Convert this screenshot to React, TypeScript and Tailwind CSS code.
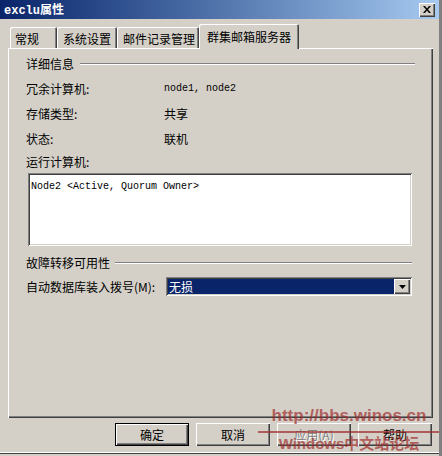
const raised =
  "shadow-[inset_1px_1px_#ffffff,inset_-1px_-1px_#404040,inset_-2px_-2px_#808080]";
const sunken =
  "shadow-[inset_1px_1px_#808080,inset_-1px_-1px_#ffffff,inset_2px_2px_#404040,inset_-2px_-2px_#d4d0c8]";

const Etched = ({ className = "" }: { className?: string }) => (
  <div className={`h-[2px] border-t border-[#808080] border-b border-b-white ${className}`} />
);

const InfoRow = ({ label, value, mono }: { label: string; value: string; mono?: boolean }) => (
  <div className="flex h-[25px] items-center">
    <span className="w-[138px]">{label}</span>
    <span className={mono ? "font-['Liberation_Mono',monospace] text-[10px]" : ""}>{value}</span>
  </div>
);

const tabs = [
  { label: "常规", w: "w-[47px]", pl: "pl-[5px]" },
  { label: "系统设置", w: "w-[60px]", pl: "pl-[6px]" },
  { label: "邮件记录管理", w: "w-[82px]", pl: "pl-[6px]" },
];

export default function App() {
  return (
    <div className="relative w-[442px] h-[456px] overflow-hidden bg-[#d4d0c8] text-[12px] leading-none text-black font-['Noto_Sans_CJK_SC',sans-serif] border-r-[3px] border-r-[#808080]">
      {/* title bar */}
      <div className="flex h-[19px] items-center justify-between bg-gradient-to-r from-[#0a246a] to-[#a6caf0] pl-[4px] pr-[4px]">
        <span className="font-bold text-white">
          <span className="font-['Liberation_Mono',monospace]">exclu</span>属性
        </span>
        <div className={`flex h-[14px] w-[16px] items-center justify-center bg-[#d4d0c8] ${raised}`}>
          <svg width="8" height="7" viewBox="0 0 8 7">
            <path d="M0 0h2l2 2.5L6 0h2L5 3.5 8 7H6L4 4.5 2 7H0l3-3.5z" fill="#000" />
          </svg>
        </div>
      </div>

      {/* tabs */}
      <div className="mt-[5px] mb-[-1px] flex h-[25px] items-end pl-[10px]">
        {tabs.map((t) => (
          <div
            key={t.label}
            className={`mb-[1px] flex h-[21px] items-center ${t.w} ${t.pl} pt-[2px] rounded-t-[2px] shadow-[inset_1px_1px_#ffffff,inset_-1px_0_#404040,inset_-2px_0_#808080]`}
          >
            {t.label}
          </div>
        ))}
        <div className="relative z-10 flex h-[25px] w-[100px] items-center rounded-t-[2px] bg-[#d4d0c8] pl-[8px] shadow-[inset_1px_1px_#ffffff,inset_-1px_0_#404040,inset_-2px_0_#808080]">
          群集邮箱服务器
        </div>
      </div>

      {/* tab panel */}
      <div className={`ml-[8px] flex h-[370px] w-[425px] flex-col pl-[18px] pr-[21px] pt-[4px] ${raised}`}>
        <div className="flex h-[24px] items-center gap-[6px] mr-[-3px]">
          <span>详细信息</span>
          <Etched className="flex-1" />
        </div>
        <InfoRow label="冗余计算机:" value="node1, node2" mono />
        <InfoRow label="存储类型:" value="共享" />
        <InfoRow label="状态:" value="联机" />
        <div className="flex h-[22px] items-center">运行计算机:</div>
        <div className={`ml-[2px] h-[73px] bg-white px-[3px] pt-[5px] ${sunken}`}>
          <span className="font-['Liberation_Mono',monospace] text-[10px]">
            Node2 &lt;Active, Quorum Owner&gt;
          </span>
        </div>
        <div className="mt-[6px] flex h-[22px] items-center gap-[5px]">
          <span>故障转移可用性</span>
          <Etched className="flex-1" />
        </div>
        <div className="mt-[3px] flex h-[19px] items-center">
          <span className="w-[140px]">自动数据库装入拨号(M):</span>
          <div className={`flex h-[19px] flex-1 items-stretch bg-white p-[2px] ${sunken}`}>
            <div className="flex flex-1 items-center bg-[#0a246a] pl-[1px] text-white">无损</div>
            <div className={`flex w-[16px] items-center justify-center bg-[#d4d0c8] ${raised}`}>
              <svg width="7" height="4" viewBox="0 0 7 4">
                <path d="M0 0h7L3.5 4z" fill="#000" />
              </svg>
            </div>
          </div>
        </div>
      </div>

      {/* buttons */}
      <div className="mt-[5px] flex gap-[7px] pl-[115px]">
        <button className={`flex h-[23px] w-[74px] items-center justify-center border border-black ${raised}`}>
          确定
        </button>
        <button className={`flex h-[23px] w-[74px] items-center justify-center ${raised}`}>取消</button>
        <button className={`flex h-[23px] w-[74px] items-center justify-center text-[#808080] [text-shadow:1px_1px_#ffffff] ${raised}`}>
          应用(A)
        </button>
        <button className={`flex h-[23px] w-[74px] items-center justify-center ${raised}`}>帮助</button>
      </div>
      <div className="mt-[6px] h-[2px] border-t border-white border-b border-b-[#404040]" />

      {/* watermark */}
      <div className="pointer-events-none absolute left-[258px] top-[405px] flex w-[182px] flex-col items-center text-[#a02c2c]/70 font-bold font-['Liberation_Sans',sans-serif]">
        <span className="h-[22px] text-[17px] leading-[22px]">http://bbs.winos.cn</span>
        <div className="mt-[4px] h-[2px] w-full bg-[#a02c2c]/70" />
        <span className="text-[15px] leading-[20px]">
          Windows<span className="font-['Noto_Sans_CJK_SC',sans-serif]">中文站论坛</span>
        </span>
      </div>
    </div>
  );
}
